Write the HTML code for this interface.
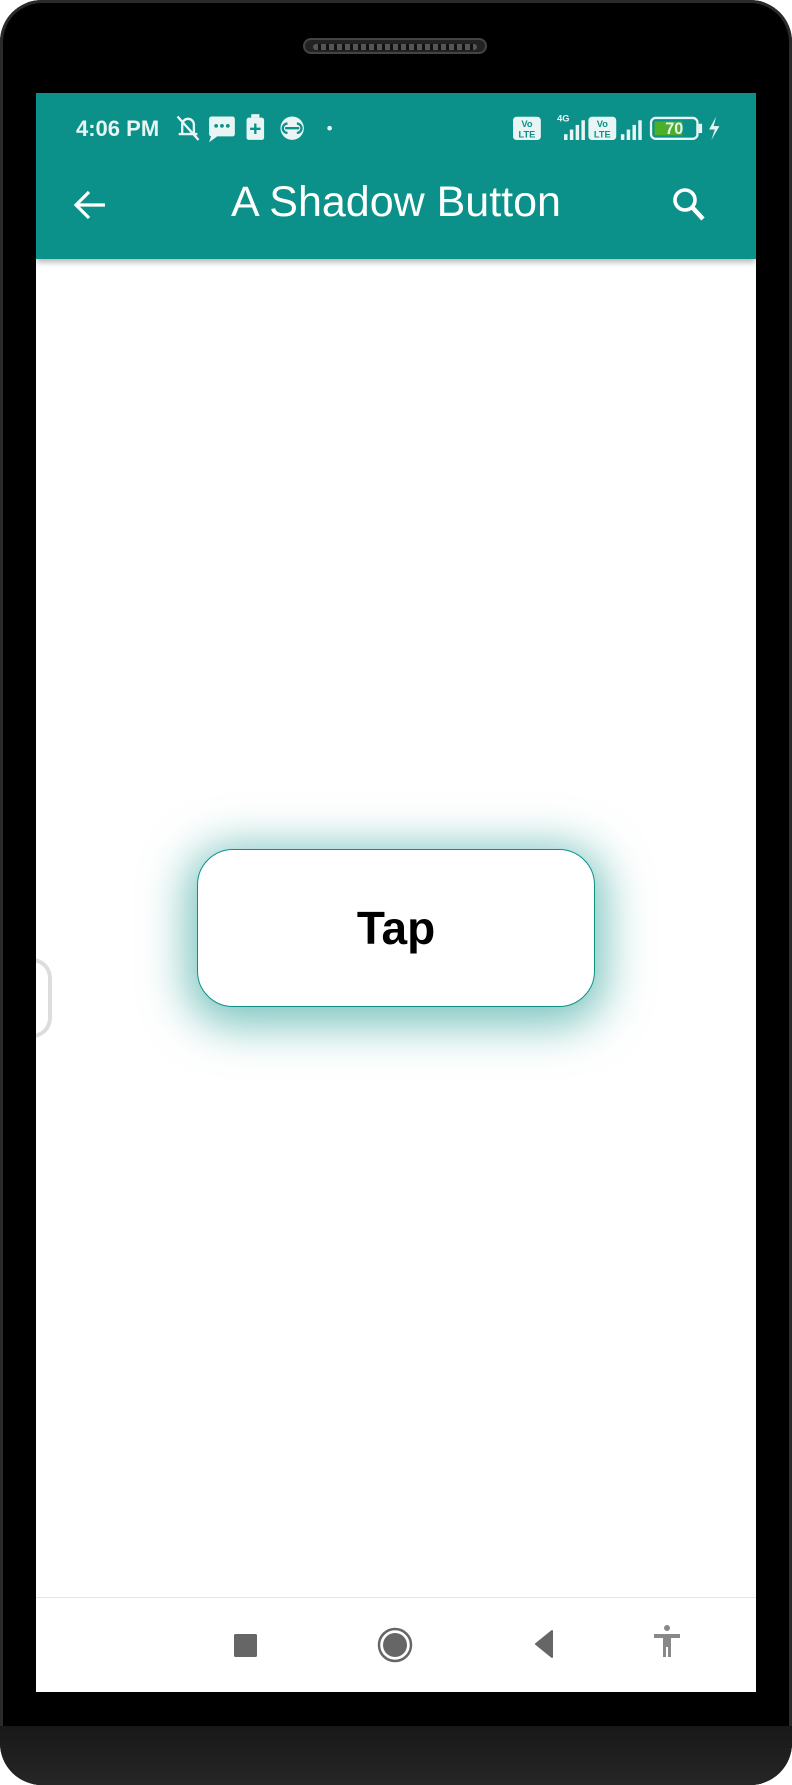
<!DOCTYPE html>
<html><head><meta charset="utf-8"><style>
*{margin:0;padding:0;box-sizing:border-box}
html,body{width:792px;height:1785px;background:#fff;overflow:hidden;font-family:"Liberation Sans",sans-serif}
.phone{position:absolute;left:0;top:0;width:792px;height:1785px;background:#000;border-radius:42px;overflow:hidden;box-shadow:inset 0 0 0 3px #2a2a2a}
.chin{position:absolute;left:0;right:0;top:1726px;bottom:0;background:linear-gradient(#181818,#262626);}
.speaker{position:absolute;left:303px;top:38px;width:184px;height:16px;border-radius:8px;background:#222;border:2px solid #444}
.speaker i{position:absolute;left:8px;right:8px;top:4px;height:6px;background:repeating-linear-gradient(90deg,#555 0 5px,#111 5px 8px);border-radius:3px}
.screen{position:absolute;left:36px;top:93px;width:720px;height:1599px;background:#fff;overflow:hidden}
.bar{position:absolute;left:0;top:0;width:720px;height:166px;background:#0b9189;box-shadow:0 3px 6px rgba(0,0,0,.3)}
.status{position:absolute;left:40px;top:23px;color:#e8f5f4;font-size:22px;font-weight:bold}
.title{position:absolute;left:0;width:720px;top:85px;text-align:center;color:#fff;font-size:43px}
.btn{position:absolute;left:161px;top:756px;width:398px;height:158px;border:1.5px solid #0b9189;border-radius:36px;background:#fff;box-shadow:0 8px 45px 10px rgba(11,145,137,.55);display:flex;align-items:center;justify-content:center;font-size:46px;font-weight:bold;color:#000}
.nav{position:absolute;left:0;top:1504px;width:720px;height:95px;border-top:1px solid #e4e4e4;background:#fff}
.handle{position:absolute;left:-8px;top:865px;width:24px;height:80px;border:4px solid #ddd;border-left:none;border-radius:0 20px 20px 0}
</style></head><body>
<div class="phone">
<div class="speaker"><i></i></div>
<div class="screen">
<div class="bar">
<div class="status">4:06 PM</div>
<svg style="position:absolute;left:138px;top:20px;transform:scale(1.17);transform-origin:0 0" width="200" height="26" viewBox="0 0 200 26">
<g fill="none" stroke="#e8f5f4" stroke-width="2"><path d="M4 18h16M7 18V10a5 5 0 0 1 10 0v8M3 3l18 20"/></g>
<rect x="30" y="3" width="22" height="17" rx="2" fill="#e8f5f4"/><path d="M32 19l-2 6 7-5z" fill="#e8f5f4"/>
<circle cx="36" cy="11" r="1.6" fill="#0b9189"/><circle cx="41" cy="11" r="1.6" fill="#0b9189"/><circle cx="46" cy="11" r="1.6" fill="#0b9189"/>
<rect x="62" y="4" width="15" height="19" rx="2" fill="#e8f5f4"/><rect x="66" y="1" width="7" height="3" fill="#e8f5f4"/><path d="M69.5 9v9M65 13.5h9" stroke="#0b9189" stroke-width="2"/>
<circle cx="101" cy="13" r="10" fill="#e8f5f4"/><path d="M97 9a4 4 0 1 0 0 8M105 9a4 4 0 1 1 0 8M95 13h12" stroke="#0b9189" stroke-width="2" fill="none"/>
<circle cx="133" cy="13" r="2" fill="#e8f5f4"/>
</svg>
<svg style="position:absolute;left:477px;top:18px;transform:scale(1.16);transform-origin:0 0" width="200" height="28" viewBox="0 0 200 28">
<rect x="0" y="5" width="24" height="20" rx="3" fill="#e8f5f4"/><text x="12" y="14" font-size="8" font-weight="bold" text-anchor="middle" fill="#0b9189" font-family="Liberation Sans">Vo</text><text x="12" y="23" font-size="8" font-weight="bold" text-anchor="middle" fill="#0b9189" font-family="Liberation Sans">LTE</text>
<text x="38" y="9" font-size="8" font-weight="bold" fill="#e8f5f4" font-family="Liberation Sans">4G</text>
<g fill="#e8f5f4"><rect x="44" y="20" width="3" height="5"/><rect x="49" y="16" width="3" height="9"/><rect x="54" y="12" width="3" height="13"/><rect x="59" y="8" width="3" height="17"/></g>
<rect x="65" y="5" width="24" height="20" rx="3" fill="#e8f5f4"/><text x="77" y="14" font-size="8" font-weight="bold" text-anchor="middle" fill="#0b9189" font-family="Liberation Sans">Vo</text><text x="77" y="23" font-size="8" font-weight="bold" text-anchor="middle" fill="#0b9189" font-family="Liberation Sans">LTE</text>
<g fill="#e8f5f4"><rect x="93" y="20" width="3" height="5"/><rect x="98" y="16" width="3" height="9"/><rect x="103" y="12" width="3" height="13"/><rect x="108" y="8" width="3" height="17"/></g>
<rect x="119" y="6" width="40" height="18" rx="4" fill="none" stroke="#e8f5f4" stroke-width="2"/><rect x="122" y="9" width="24" height="12" fill="#4caf2a"/><rect x="160" y="11" width="3" height="8" fill="#e8f5f4"/>
<text x="139" y="20" font-size="14" font-weight="bold" text-anchor="middle" fill="#e8f5f4" font-family="Liberation Sans">70</text>
<path d="M175 5l-6 11h5l-3 9 7-12h-5z" fill="#e8f5f4"/>
</svg>
<svg style="position:absolute;left:36px;top:94px" width="36" height="36" viewBox="0 0 36 36"><path d="M33 18H5M17 5L4 18l13 13" stroke="#fff" stroke-width="3.2" fill="none"/></svg>
<div class="title">A Shadow Button</div>
<svg style="position:absolute;left:634px;top:93px" width="40" height="38" viewBox="0 0 40 38"><circle cx="15" cy="14" r="10" stroke="#fff" stroke-width="3.6" fill="none"/><path d="M22 21l11 12" stroke="#fff" stroke-width="4.5"/></svg>
</div>
<div class="handle"></div>
<div class="btn">Tap</div>
<div class="nav">
<svg style="position:absolute;left:0;top:0" width="720" height="95">
<rect x="198" y="36" width="23" height="23" rx="1.5" fill="#666"/>
<circle cx="359" cy="47" r="16" fill="none" stroke="#666" stroke-width="2.5"/><circle cx="359" cy="47" r="12" fill="#666"/>
<path d="M516 33v26l-16-13z" fill="#666" stroke="#666" stroke-width="2" stroke-linejoin="round"/>
<circle cx="631" cy="30" r="3" fill="#888"/><path d="M618 36h26v4h-9v19h-3v-10h-2v10h-3v-19h-9z" fill="#888"/>
</svg>
</div>
</div>
<div class="chin"></div>
</div>
</body></html>
